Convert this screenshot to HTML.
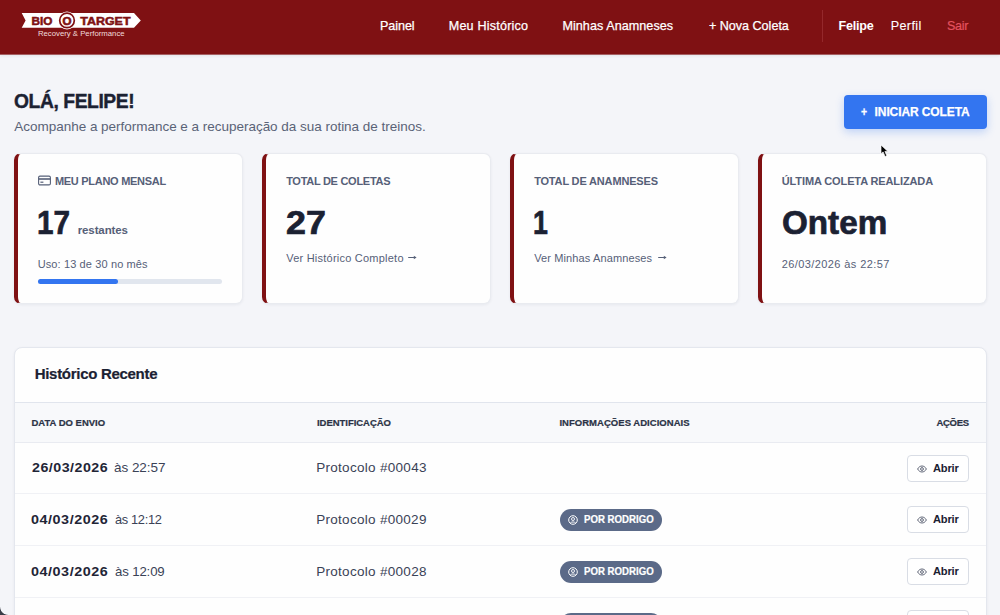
<!DOCTYPE html>
<html lang="pt-BR">
<head>
<meta charset="utf-8">
<title>BioTarget - Painel</title>
<style>
*{box-sizing:border-box;margin:0;padding:0}
html,body{width:1000px;height:615px;overflow:hidden}
body{background:#f4f5f9;font-family:"Liberation Sans",Arial,sans-serif;color:#1b2132;position:relative}
.hdr{position:absolute;left:0;top:0;width:1000px;height:55px;background:#7f1113;border-bottom:1px solid #a66063;box-shadow:0 1px 3px rgba(0,0,0,.07)}
.nav a{position:absolute;top:18px;height:16px;line-height:16px;font-size:12.6px;color:#fff;white-space:nowrap;text-decoration:none;-webkit-text-stroke:.25px #fff}
.sep{position:absolute;left:822px;top:10px;width:1px;height:32px;background:#94282b}
.logo{position:absolute;left:20px;top:9px}
h1{position:absolute;left:14px;top:89.4px;font-size:20px;line-height:24px;font-weight:bold;color:#1b2132;white-space:nowrap;-webkit-text-stroke:.4px #1b2132}
.sub{position:absolute;left:14px;top:118px;font-size:13.5px;line-height:17px;color:#5a6377;white-space:nowrap}
.btn{position:absolute;left:844px;top:95px;width:143px;height:34px;border-radius:4px;background:#3375f0;color:#fff;font-size:12px;font-weight:bold;line-height:34px;white-space:nowrap;box-shadow:0 3px 8px rgba(51,117,240,.28)}
.btn span{position:absolute;top:0;-webkit-text-stroke:.25px #fff}
.card{position:absolute;top:153px;width:229px;height:151px;background:#fefefe;border-radius:7px;border:1px solid #e9ebf0;border-left:4px solid #7f1113;box-shadow:0 1px 3px rgba(20,30,60,.06)}
.card .lbl{position:absolute;left:20px;top:20px;font-size:11px;line-height:14px;font-weight:bold;color:#566078;white-space:nowrap}
.card .big{position:absolute;left:20px;top:49.6px;font-size:33px;line-height:38px;font-weight:bold;color:#1b2132;white-space:nowrap;-webkit-text-stroke:.7px #1b2132}
.card .sm{position:absolute;left:20px;font-size:11px;line-height:14px;color:#566078;white-space:nowrap}
.tbl{position:absolute;left:14px;top:347px;width:973px;height:300px;background:#fefefe;border:1px solid #e4e7ee;border-radius:8px 8px 0 0;box-shadow:0 1px 3px rgba(20,30,60,.06)}
.tbl h2{position:absolute;left:20px;top:17px;font-size:15px;line-height:18px;font-weight:bold;color:#1b2132;white-space:nowrap;-webkit-text-stroke:.2px #1b2132}
.thead{position:absolute;left:0;top:54px;width:971px;height:41px;background:#f8f9fb;border-top:1px solid #e1e5ed;border-bottom:1px solid #e9ebf1}
.thead span{position:absolute;top:14.2px;font-size:9.5px;line-height:12px;font-weight:bold;color:#2b3346;white-space:nowrap;-webkit-text-stroke:.2px #2b3346}
.row{position:absolute;left:0;width:971px;height:52px;border-bottom:1px solid #f0f1f5}
.row .d{position:absolute;left:17px;top:17px;font-size:13.5px;line-height:16px;font-weight:bold;color:#1f2536;white-space:nowrap}
.row .t{position:absolute;top:17px;font-size:13.5px;line-height:16px;color:#3a4256;white-space:nowrap}
.row .p{position:absolute;left:302px;top:17px;font-size:13.5px;line-height:16px;color:#3a4256;white-space:nowrap}
.r2 .d,.r2 .t,.r2 .p{top:18px}.r3 .d,.r3 .t,.r3 .p{top:17.5px}
.badge{position:absolute;left:545px;top:15px;width:102px;height:22px;border-radius:11px;background:#5b6a88;color:#fff;font-size:10.4px;font-weight:bold;line-height:22px;white-space:nowrap}
.badge span{position:absolute;left:24px;top:0;-webkit-text-stroke:.2px #fff}
.badge svg{position:absolute;left:8px;top:6px}
.open{position:absolute;left:892px;top:12px;width:62px;height:27px;border:1px solid #d9dde5;border-radius:4px;background:#fff;font-size:11.5px;font-weight:bold;color:#1b2132;line-height:25px;white-space:nowrap}
.open span{position:absolute;left:25px;top:0}
.open svg{position:absolute;left:9px;top:8.5px}
.corner{position:absolute;left:0;top:607px;width:8px;height:8px;background:radial-gradient(circle at 8px 0px,rgba(58,62,72,0) 7.4px,#3a3e48 8.2px)}
</style>
</head>
<body>
<div class="hdr">
  <svg class="logo" width="130" height="34" viewBox="0 0 130 34">
    <path d="M1.7 4 H114 L120.8 11.4 L114 18.8 H1.7 L5.6 11.4 Z" fill="#fff"/>
    <circle cx="47" cy="11.4" r="9" fill="#fff"/>
    <circle cx="47" cy="11.4" r="7.3" fill="none" stroke="#7f1113" stroke-width="1.7"/>
    <text x="11.5" y="15.7" font-family="Liberation Sans,Arial,sans-serif" font-weight="bold" font-size="10.6" fill="#7f1113" stroke="#7f1113" stroke-width=".5" textLength="20.9" lengthAdjust="spacingAndGlyphs">BIO</text>
    <text x="42.5" y="15.8" font-family="Liberation Sans,Arial,sans-serif" font-weight="bold" font-size="11" fill="#7f1113" stroke="#7f1113" stroke-width=".6" textLength="9" lengthAdjust="spacingAndGlyphs">O</text>
    <text x="60.3" y="15.7" font-family="Liberation Sans,Arial,sans-serif" font-weight="bold" font-size="10.6" fill="#7f1113" stroke="#7f1113" stroke-width=".5" textLength="50.2" lengthAdjust="spacingAndGlyphs">TARGET</text>
    <text x="17.9" y="27.3" font-family="Liberation Sans,Arial,sans-serif" font-size="7.4" fill="#f1dcdc" textLength="86.7" lengthAdjust="spacingAndGlyphs">Recovery &amp; Performance</text>
  </svg>
  <div class="nav">
    <a style="left:379.99px;letter-spacing:-0.065px">Painel</a>
    <a style="left:448.76px;letter-spacing:0.188px">Meu Histórico</a>
    <a style="left:562.42px;letter-spacing:0.053px">Minhas Anamneses</a>
    <a style="left:708.90px;letter-spacing:-0.015px">+ Nova Coleta</a>
    <a style="left:838.9px;font-weight:bold;-webkit-text-stroke:0;left:838.43px;letter-spacing:-0.189px">Felipe</a>
    <a style="-webkit-text-stroke:.1px #fff;left:890.71px;letter-spacing:0.379px">Perfil</a>
    <a style="left:947.5px;color:#e4525f;-webkit-text-stroke:.2px #e4525f;left:946.89px;letter-spacing:-0.307px">Sair</a>
  </div>
  <div class="sep"></div>
</div>

<h1 style="left:13.75px;letter-spacing:-0.423px;transform:scaleX(0.9624);transform-origin:0 50%">OLÁ, FELIPE!</h1>
<div class="sub" style="left:14.31px;letter-spacing:-0.022px">Acompanhe a performance e a recuperação da sua rotina de treinos.</div>
<div class="btn"><span style="left:17.40px;transform:scaleX(0.8714);transform-origin:0 50%">+</span><span style="left:30.60px;letter-spacing:-0.106px">INICIAR COLETA</span></div>

<div class="card" style="left:14px">
  <svg style="position:absolute;left:20px;top:21.3px" width="13" height="11" viewBox="0 0 13 11"><rect x=".6" y="1.1" width="11.8" height="8.8" rx="1.4" fill="none" stroke="#566078" stroke-width="1.1"/><rect x=".6" y="3.2" width="11.8" height="1.6" fill="#566078"/><rect x="2.4" y="6.6" width="3" height="1.2" fill="#566078"/></svg>
  <div class="lbl" style="left:36.90px;letter-spacing:-0.279px">MEU PLANO MENSAL</div>
  <div class="big" style="left:19.00px;transform:scaleX(0.8995);transform-origin:0 50%">17</div>
  <div class="sm" style="left:59.5px;top:68.5px;font-size:11.5px;font-weight:bold;left:59.70px;letter-spacing:-0.105px">restantes</div>
  <div class="sm" style="top:102.5px;left:19.68px;letter-spacing:0.122px">Uso: 13 de 30 no mês</div>
  <div style="position:absolute;left:20px;top:124.5px;width:184px;height:5px;border-radius:2.5px;background:#e1e6ee"><div style="width:80px;height:5px;border-radius:2.5px;background:#3375f0"></div></div>
</div>
<div class="card" style="left:262px">
  <div class="lbl" style="left:20.13px;letter-spacing:-0.279px">TOTAL DE COLETAS</div>
  <div class="big" style="left:19.58px;transform:scaleX(1.0859);transform-origin:0 50%">27</div>
  <div class="sm" style="top:97px;left:20.20px;letter-spacing:0.230px">Ver Histórico Completo</div>
  <svg class="arr" style="position:absolute;left:142px;top:100px" width="9" height="7" viewBox="0 0 9 7"><path d="M.2 3.5H7" fill="none" stroke="#566078" stroke-width="1"/><path d="M5.8 1.7L8.6 3.5L5.8 5.3Z" fill="#566078"/></svg>
</div>
<div class="card" style="left:510px">
  <div class="lbl" style="left:20.13px;letter-spacing:-0.167px">TOTAL DE ANAMNESES</div>
  <div class="big" style="left:18.77px;transform:scaleX(0.8108);transform-origin:0 50%">1</div>
  <div class="sm" style="top:97px;left:20.20px;letter-spacing:0.123px">Ver Minhas Anamneses</div>
  <svg class="arr" style="position:absolute;left:144px;top:100px" width="9" height="7" viewBox="0 0 9 7"><path d="M.2 3.5H7" fill="none" stroke="#566078" stroke-width="1"/><path d="M5.8 1.7L8.6 3.5L5.8 5.3Z" fill="#566078"/></svg>
</div>
<div class="card" style="left:758px">
  <div class="lbl" style="left:19.75px;letter-spacing:-0.120px">ÚLTIMA COLETA REALIZADA</div>
  <div class="big" style="left:19.62px;transform:scaleX(1.0065);transform-origin:0 50%">Ontem</div>
  <div class="sm" style="top:103px;left:19.75px;letter-spacing:0.402px">26/03/2026 às 22:57</div>
</div>

<div class="tbl">
  <h2 style="left:19.73px;letter-spacing:-0.299px">Histórico Recente</h2>
  <div class="thead">
    <span style="left:16.43px;letter-spacing:-0.001px">DATA DO ENVIO</span>
    <span style="left:302.02px;letter-spacing:-0.044px">IDENTIFICAÇÃO</span>
    <span style="left:544.42px;letter-spacing:0.031px">INFORMAÇÕES ADICIONAIS</span>
    <span style="left:921.54px;letter-spacing:-0.324px">AÇÕES</span>
  </div>
  <div class="row" style="top:95px;height:51px">
    <div class="d" style="left:16.65px;letter-spacing:0.449px;transform:scaleX(1.0560);transform-origin:0 50%">26/03/2026</div><div class="t" style="left:99.07px;letter-spacing:-0.056px">às 22:57</div>
    <div class="p" style="left:301.18px;letter-spacing:0.297px">Protocolo #00043</div>
    <div class="open"><svg width="10" height="8" viewBox="0 0 10 8"><path d="M.6 4C1.8 1.9 3.3 1 5 1S8.2 1.9 9.4 4C8.2 6.1 6.7 7 5 7S1.8 6.1 .6 4Z" fill="none" stroke="#394055" stroke-width=".8"/><circle cx="5" cy="4" r="1.4" fill="none" stroke="#394055" stroke-width=".8"/></svg><span style="left:25.48px;letter-spacing:-0.222px;transform:scaleX(0.9672);transform-origin:0 50%">Abrir</span></div>
  </div>
  <div class="row r2" style="top:146px">
    <div class="d" style="left:16.22px;letter-spacing:0.512px;transform:scaleX(1.0634);transform-origin:0 50%">04/03/2026</div><div class="t" style="left:99.74px;letter-spacing:-0.355px;transform:scaleX(0.9490);transform-origin:0 50%">às 12:12</div>
    <div class="p" style="left:301.18px;letter-spacing:0.294px">Protocolo #00029</div>
    <div class="badge"><svg width="10" height="10" viewBox="0 0 10 10"><circle cx="5" cy="5" r="4.3" fill="none" stroke="#fff" stroke-width="1"/><circle cx="5" cy="4" r="1.5" fill="none" stroke="#fff" stroke-width=".9"/><path d="M2.3 8.1C3 6.6 7 6.6 7.7 8.1" fill="none" stroke="#fff" stroke-width=".9"/></svg><span style="left:24.00px;transform:scaleX(0.9284);transform-origin:0 50%">POR RODRIGO</span></div>
    <div class="open"><svg width="10" height="8" viewBox="0 0 10 8"><path d="M.6 4C1.8 1.9 3.3 1 5 1S8.2 1.9 9.4 4C8.2 6.1 6.7 7 5 7S1.8 6.1 .6 4Z" fill="none" stroke="#394055" stroke-width=".8"/><circle cx="5" cy="4" r="1.4" fill="none" stroke="#394055" stroke-width=".8"/></svg><span style="left:25.48px;letter-spacing:-0.222px;transform:scaleX(0.9672);transform-origin:0 50%">Abrir</span></div>
  </div>
  <div class="row r3" style="top:198px">
    <div class="d" style="left:16.22px;letter-spacing:0.512px;transform:scaleX(1.0634);transform-origin:0 50%">04/03/2026</div><div class="t" style="left:99.67px;letter-spacing:-0.148px;transform:scaleX(0.9794);transform-origin:0 50%">às 12:09</div>
    <div class="p" style="left:301.18px;letter-spacing:0.297px">Protocolo #00028</div>
    <div class="badge"><svg width="10" height="10" viewBox="0 0 10 10"><circle cx="5" cy="5" r="4.3" fill="none" stroke="#fff" stroke-width="1"/><circle cx="5" cy="4" r="1.5" fill="none" stroke="#fff" stroke-width=".9"/><path d="M2.3 8.1C3 6.6 7 6.6 7.7 8.1" fill="none" stroke="#fff" stroke-width=".9"/></svg><span style="left:24.00px;transform:scaleX(0.9284);transform-origin:0 50%">POR RODRIGO</span></div>
    <div class="open"><svg width="10" height="8" viewBox="0 0 10 8"><path d="M.6 4C1.8 1.9 3.3 1 5 1S8.2 1.9 9.4 4C8.2 6.1 6.7 7 5 7S1.8 6.1 .6 4Z" fill="none" stroke="#394055" stroke-width=".8"/><circle cx="5" cy="4" r="1.4" fill="none" stroke="#394055" stroke-width=".8"/></svg><span style="left:25.48px;letter-spacing:-0.222px;transform:scaleX(0.9672);transform-origin:0 50%">Abrir</span></div>
  </div>
  <div class="row" style="top:250px">
    <div class="badge"></div>
    <div class="open"></div>
  </div>
</div>
<svg style="position:absolute;left:880.3px;top:143.8px" width="11" height="15" viewBox="0 0 11 15"><path d="M1 1V9.8L3.1 7.9L5.1 12.5L6.8 11.8L4.9 7.4H7.9Z" fill="#000" stroke="#fff" stroke-width=".7" stroke-linejoin="round"/></svg>
<div class="corner"></div>
</body>
</html>
